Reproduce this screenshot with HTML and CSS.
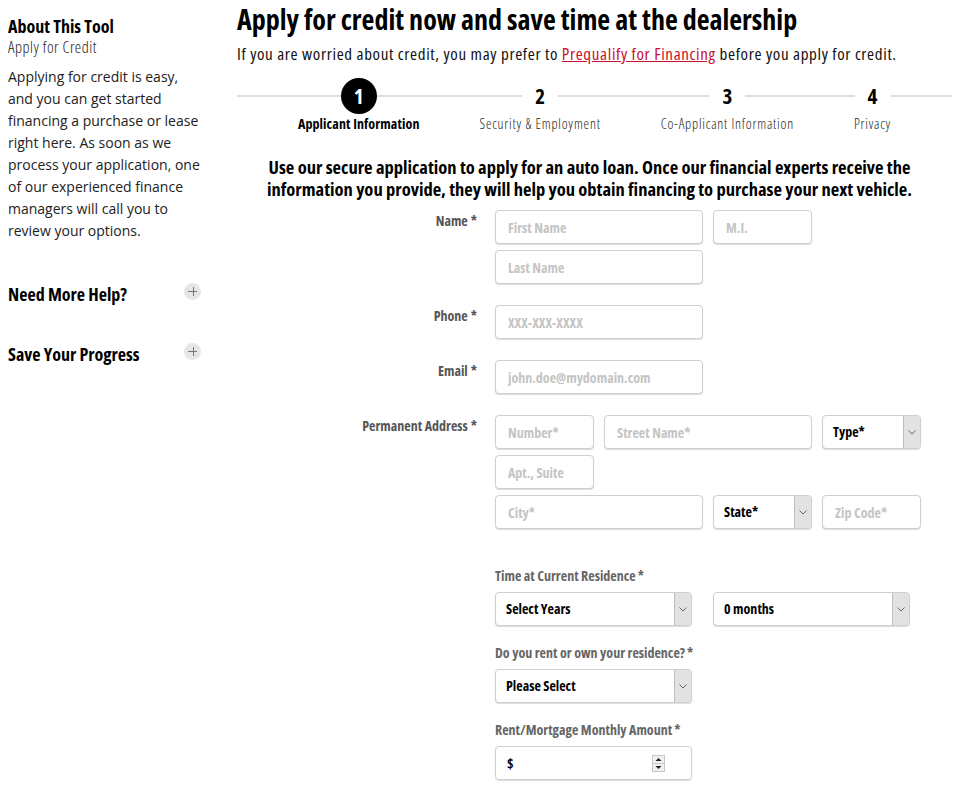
FILE: index.html
```html
<!DOCTYPE html>
<html lang="en">
<head>
<meta charset="utf-8">
<title>Apply for Credit</title>
<link rel="stylesheet" href="styles.css">
</head>
<body>
<div class="page">
  <aside class="sidebar">
    <h2 class="side-title">About This Tool</h2>
    <div class="side-sub">Apply for Credit</div>
    <p class="side-text">Applying for credit is easy, and you can get started financing a purchase or lease right here. As soon as we process your application, one of our experienced finance managers will call you to review your options.</p>
    <div class="side-toggle first"><span>Need More Help?</span><span class="plus"></span></div>
    <div class="side-toggle"><span>Save Your Progress</span><span class="plus"></span></div>
  </aside>
  <main class="main">
    <h1 class="title">Apply for credit now and save time at the dealership</h1>
    <p class="lead">If you are worried about credit, you may prefer to <a href="#" class="link">Prequalify for Financing</a> before you apply for credit.</p>
    <ol class="steps">
      <li class="step active"><span class="num">1</span><span class="step-label">Applicant Information</span></li>
      <li class="step"><span class="num">2</span><span class="step-label">Security &amp; Employment</span></li>
      <li class="step"><span class="num">3</span><span class="step-label">Co-Applicant Information</span></li>
      <li class="step"><span class="num">4</span><span class="step-label">Privacy</span></li>
    </ol>
    <p class="intro">Use our secure application to apply for an auto loan. Once our financial experts receive the information you provide, they will help you obtain financing to purchase your next vehicle.</p>
    <form class="form">
      <div class="row">
        <div class="row-label">Name<span class="req">*</span></div>
        <div class="grid4">
          <input class="field span2" placeholder="First Name">
          <input class="field" placeholder="M.I.">
          <input class="field first2" placeholder="Last Name">
        </div>
      </div>
      <div class="row">
        <div class="row-label">Phone<span class="req">*</span></div>
        <div class="grid4">
          <input class="field span2" placeholder="XXX-XXX-XXXX">
        </div>
      </div>
      <div class="row">
        <div class="row-label">Email<span class="req">*</span></div>
        <div class="grid4">
          <input class="field span2" placeholder="john.doe@mydomain.com">
        </div>
      </div>
      <div class="row row-address">
        <div class="row-label">Permanent Address<span class="req">*</span></div>
        <div class="grid4">
          <input class="field" placeholder="Number*">
          <input class="field span2" placeholder="Street Name*">
          <div class="select"><span class="select-text">Type*</span><span class="select-btn"><svg width="8" height="5" viewBox="0 0 8 5"><path d="M0.5 0.5 L4 4 L7.5 0.5" fill="none" stroke="#666" stroke-width="1"/></svg></span></div>
          <input class="field newrow" placeholder="Apt., Suite">
          <input class="field first2" placeholder="City*">
          <div class="select"><span class="select-text">State*</span><span class="select-btn"><svg width="8" height="5" viewBox="0 0 8 5"><path d="M0.5 0.5 L4 4 L7.5 0.5" fill="none" stroke="#666" stroke-width="1"/></svg></span></div>
          <input class="field" placeholder="Zip Code*">
        </div>
      </div>
      <div class="row">
        <div></div>
        <div class="stack">
          <div class="stack-label">Time at Current Residence<span class="req">*</span></div>
          <div class="pair">
            <div class="select wide"><span class="select-text">Select Years</span><span class="select-btn"><svg width="8" height="5" viewBox="0 0 8 5"><path d="M0.5 0.5 L4 4 L7.5 0.5" fill="none" stroke="#666" stroke-width="1"/></svg></span></div>
            <div class="select wide"><span class="select-text">0 months</span><span class="select-btn"><svg width="8" height="5" viewBox="0 0 8 5"><path d="M0.5 0.5 L4 4 L7.5 0.5" fill="none" stroke="#666" stroke-width="1"/></svg></span></div>
          </div>
          <div class="stack-label">Do you rent or own your residence?<span class="req">*</span></div>
          <div class="pair">
            <div class="select wide"><span class="select-text">Please Select</span><span class="select-btn"><svg width="8" height="5" viewBox="0 0 8 5"><path d="M0.5 0.5 L4 4 L7.5 0.5" fill="none" stroke="#666" stroke-width="1"/></svg></span></div>
          </div>
          <div class="stack-label">Rent/Mortgage Monthly Amount<span class="req">*</span></div>
          <div class="pair">
            <div class="money"><span class="money-text">$</span><span class="spin"><svg width="13" height="17" viewBox="0 0 13 17"><rect x="0.5" y="0.5" width="12" height="16" fill="#f0f0f0" stroke="#c8c8c8"/><line x1="1" y1="8.5" x2="12" y2="8.5" stroke="#c8c8c8"/><path d="M3.5 6 L6.5 3 L9.5 6 Z" fill="#222"/><path d="M3.5 11 L6.5 14 L9.5 11 Z" fill="#222"/></svg></span></div>
          </div>
        </div>
      </div>
    </form>
  </main>
</div>
</body>
</html>
```

FILE: styles.css
```css
* { box-sizing: border-box; }

body {
  margin: 0;
  background: #fff;
  color: #111;
  font-family: "Open Sans", "Liberation Sans", sans-serif;
}

.page {
  display: flex;
  align-items: flex-start;
}

/* ---------- sidebar ---------- */
.sidebar {
  width: 208px;
  padding: 15px 0 0 8px;
  flex: none;
}

.side-title {
  margin: 0;
  font-size: 18px;
  line-height: 22px;
  font-weight: 700;
  font-stretch: 75%;
  color: #000;
}

.side-sub {
  font-size: 16px;
  line-height: 20px;
  font-weight: 300;
  font-stretch: 75%;
  letter-spacing: 0.5px;
  color: #222;
}

.side-text {
  width: 194px;
  margin: 9px 0 0;
  font-size: 14px;
  line-height: 22px;
  color: #222;
}

.side-toggle {
  display: flex;
  justify-content: space-between;
  align-items: center;
  margin-top: 38px;
  padding-right: 7px;
  font-size: 18px;
  line-height: 22px;
  font-weight: 700;
  font-stretch: 75%;
  color: #000;
}

.side-toggle.first { margin-top: 41px; }

.plus {
  position: relative;
  width: 17px;
  height: 17px;
  border-radius: 50%;
  background: #e6e6e6;
  margin-top: -6px;
}

.plus::before,
.plus::after {
  content: "";
  position: absolute;
  background: #777;
  left: 50%;
  top: 50%;
}

.plus::before { width: 9px; height: 1px; margin: 0 0 0 -4.5px; }
.plus::after { width: 1px; height: 9px; margin: -4.5px 0 0 0; }

/* ---------- main ---------- */
.main {
  flex: 1;
  min-width: 0;
  margin-left: 29px;
  margin-right: 8px;
}

.title {
  margin: 0;
  font-size: 28px;
  line-height: 38px;
  font-weight: 700;
  font-stretch: 75%;
  color: #000;
}

.lead {
  margin: 5px 0 0;
  font-size: 17px;
  line-height: 22px;
  font-weight: 400;
  font-stretch: 75%;
  letter-spacing: 0.65px;
  color: #111;
  white-space: nowrap;
}

.link {
  color: #c8102e;
  text-decoration: underline;
}

/* stepper */
.steps {
  position: relative;
  display: flex;
  justify-content: center;
  gap: 60px;
  list-style: none;
  margin: 13px 0 0;
  padding: 0;
}

.steps::before {
  content: "";
  position: absolute;
  left: 0;
  right: 0;
  top: 17px;
  height: 2px;
  background: #dedede;
}

.step {
  position: relative;
  display: flex;
  flex-direction: column;
  align-items: center;
}

.num {
  width: 36px;
  height: 36px;
  border-radius: 50%;
  background: #fff;
  display: flex;
  align-items: center;
  justify-content: center;
  font-size: 21px;
  font-weight: 700;
  font-stretch: 75%;
  color: #000;
}

.step.active .num {
  background: #000;
  color: #fff;
}

.step-label {
  margin-top: 1px;
  font-size: 14px;
  line-height: 18px;
  font-weight: 300;
  font-stretch: 75%;
  letter-spacing: 0.8px;
  color: #222;
  white-space: nowrap;
}

.step.active .step-label {
  font-weight: 700;
  letter-spacing: 0.1px;
  color: #000;
}

.intro {
  margin: 23px 0 0;
  padding-right: 10px;
  text-align: center;
  font-size: 18.5px;
  line-height: 22px;
  font-weight: 700;
  font-stretch: 75%;
  color: #000;
}

/* form */
.form {
  margin-top: 10px;
}

.row {
  display: grid;
  grid-template-columns: 240px 426px;
  column-gap: 18px;
  margin-bottom: 21px;
}

.row-address { margin-bottom: 38px; }

.row-label {
  padding-top: 2px;
  text-align: right;
  font-size: 14px;
  line-height: 18px;
  font-weight: 700;
  font-stretch: 75%;
  color: #555;
}

.req {
  margin-left: 3px;
  color: #555;
}

.grid4 {
  display: grid;
  grid-template-columns: repeat(4, 99px);
  column-gap: 10px;
  row-gap: 6px;
  align-content: start;
}

.span2 { grid-column: span 2; }
.newrow { grid-column: 1 / span 1; }
.first2 { grid-column: 1 / span 2; }

.field {
  height: 34px;
  margin: 0;
  padding: 0 12px;
  border: 1px solid #cfcfcf;
  border-radius: 4px;
  box-shadow: 0 1px 1px rgba(0, 0, 0, 0.14);
  background: #fff;
  font-family: "Open Sans", "Liberation Sans", sans-serif;
  font-size: 14px;
  font-weight: 700;
  font-stretch: 75%;
  color: #111;
  min-width: 0;
  width: 100%;
}

.field::placeholder {
  color: #c4c4c4;
  opacity: 1;
}

.select {
  display: flex;
  height: 34px;
  border: 1px solid #cfcfcf;
  border-radius: 4px;
  box-shadow: 0 1px 1px rgba(0, 0, 0, 0.14);
  background: #fff;
  overflow: hidden;
}

.select-text {
  flex: 1;
  padding-left: 10px;
  font-size: 14px;
  line-height: 32px;
  font-weight: 700;
  font-stretch: 75%;
  color: #000;
}

.select-btn {
  width: 17px;
  flex: none;
  display: flex;
  align-items: center;
  justify-content: center;
  background: #e2e2e2;
  border-left: 1px solid #bdbdbd;
}

.stack {
  display: flex;
  flex-direction: column;
}

.stack-label {
  font-size: 14px;
  line-height: 18px;
  font-weight: 700;
  font-stretch: 75%;
  color: #666;
  margin-bottom: 7px;
}

.stack-label .req { margin-left: 2px; color: #666; }

.pair {
  display: flex;
  gap: 21px;
  margin-bottom: 18px;
}

.select.wide {
  width: 197px;
}

.money {
  width: 197px;
  height: 34px;
  display: flex;
  align-items: center;
  justify-content: space-between;
  padding: 0 26px 0 11px;
  border: 1px solid #cfcfcf;
  border-radius: 4px;
  box-shadow: 0 1px 1px rgba(0, 0, 0, 0.14);
}

.money-text {
  font-size: 14px;
  font-weight: 700;
  font-stretch: 75%;
  color: #000;
}

.spin {
  display: flex;
}
```
